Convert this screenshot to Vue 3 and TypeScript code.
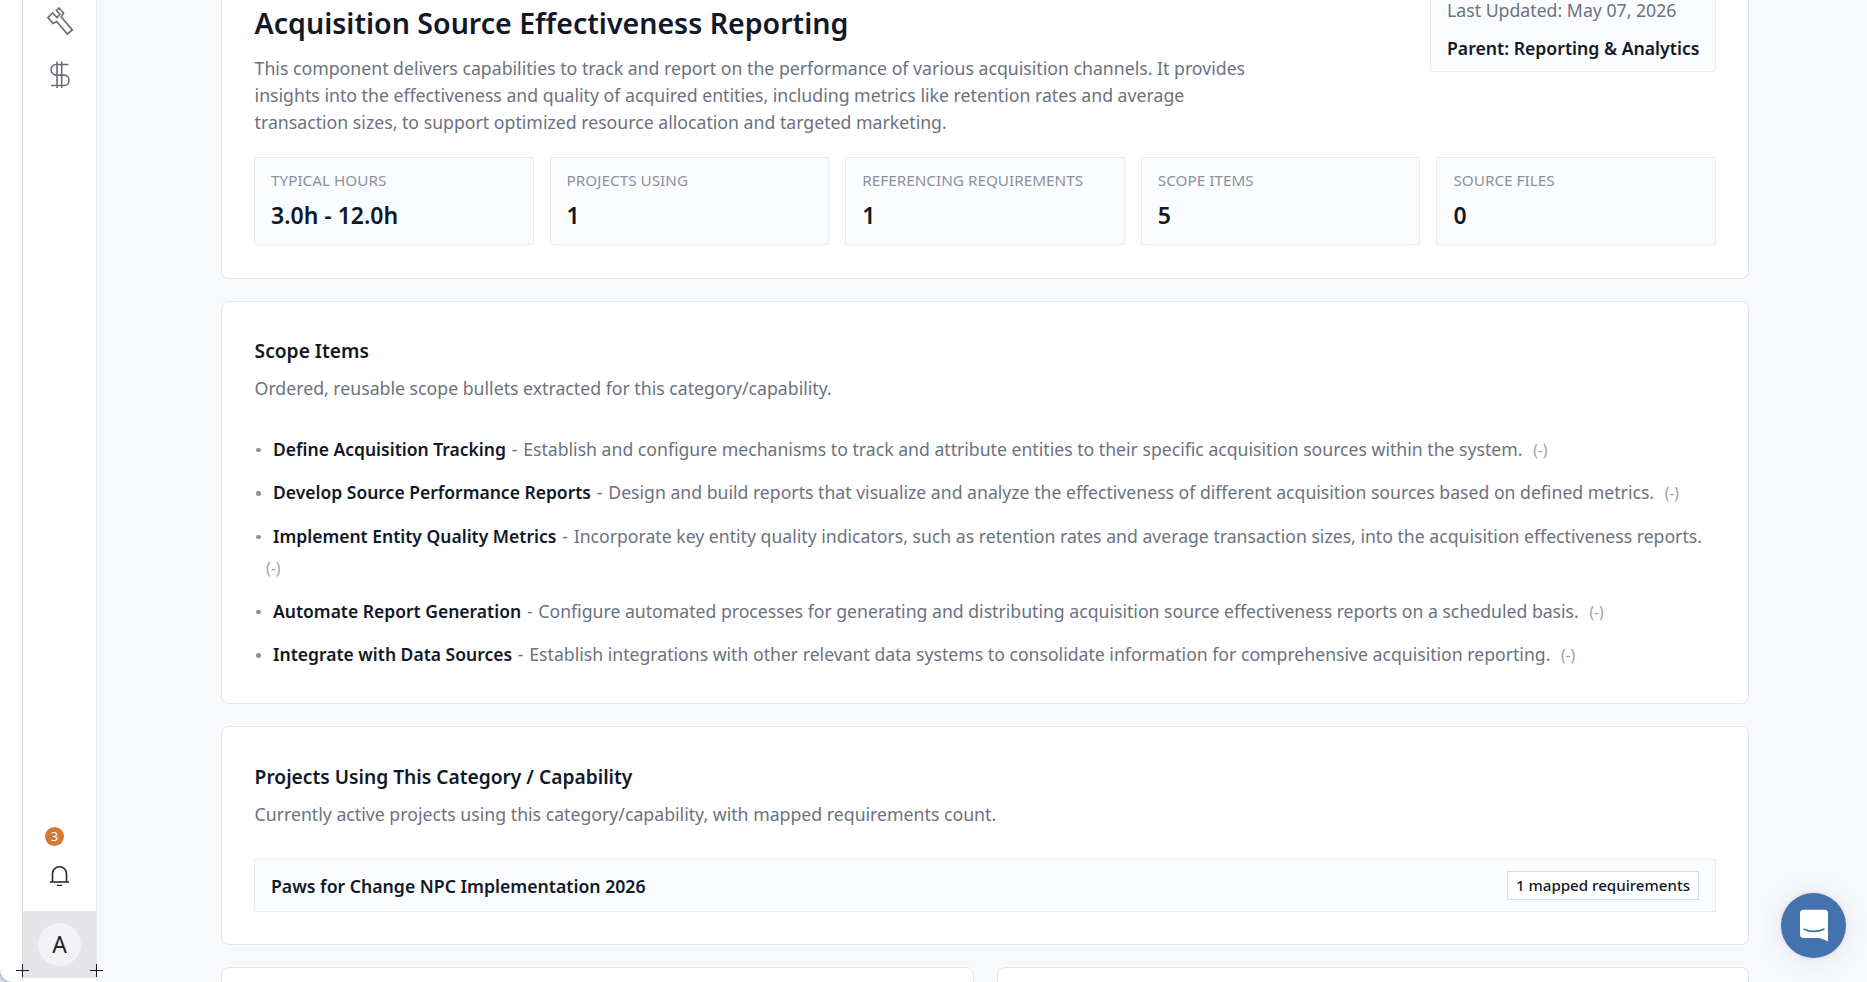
<script setup lang="ts">
interface Stat { label: string; value: string }
interface Scope { title: string; text: string }

const stats: Stat[] = [
  { label: 'TYPICAL HOURS', value: '3.0h - 12.0h' },
  { label: 'PROJECTS USING', value: '1' },
  { label: 'REFERENCING REQUIREMENTS', value: '1' },
  { label: 'SCOPE ITEMS', value: '5' },
  { label: 'SOURCE FILES', value: '0' },
]

const scopes: Scope[] = [
  { title: 'Define Acquisition Tracking', text: 'Establish and configure mechanisms to track and attribute entities to their specific acquisition sources within the system.' },
  { title: 'Develop Source Performance Reports', text: 'Design and build reports that visualize and analyze the effectiveness of different acquisition sources based on defined metrics.' },
  { title: 'Implement Entity Quality Metrics', text: 'Incorporate key entity quality indicators, such as retention rates and average transaction sizes, into the acquisition effectiveness reports.' },
  { title: 'Automate Report Generation', text: 'Configure automated processes for generating and distributing acquisition source effectiveness reports on a scheduled basis.' },
  { title: 'Integrate with Data Sources', text: 'Establish integrations with other relevant data systems to consolidate information for comprehensive acquisition reporting.' },
]
</script>

<template>
  <div class="frame">
    <div class="strip"></div>
    <aside class="rail">
      <div class="rail-top">
        <svg class="ico-a" viewBox="44 4 32 34" fill="none" stroke="#6f6b7b" stroke-width="1.7" stroke-linejoin="miter">
          <path d="M59 8 63.500 13 61.300 17 72.300 30 67.300 34 56.700 21.500 53 23.500 48 17.500 52.500 13 57 17.500 60 14 56.500 10.500Z" />
        </svg>
        <svg class="ico-b" viewBox="44 50 32 32" fill="none" stroke="#6f6b7b" stroke-width="1.6">
          <path d="M68.500 55.500H56a5 5.300 0 0 0 0 10.600h8.500a4.500 5.200 0 0 1 0 10.400H51" />
          <path d="M57 52.500v26.500M61.700 52.500v26.500" />
        </svg>
      </div>
      <div class="rail-bottom">
        <span class="badge">3</span>
        <svg class="bell" viewBox="0 0 24 24" fill="none" stroke="#24242c" stroke-width="1.8">
          <path d="M1 19.500h22M4 19.500V10a8 8 0 0 1 16 0v9.500M9 23.500h6" />
        </svg>
        <div class="user"><span class="avatar">A</span></div>
      </div>
      <span class="plus plus-l"></span>
      <span class="plus plus-r"></span>
    </aside>

    <main class="page">
      <section class="card head">
        <div class="head-row">
          <div class="head-text">
            <h1>Acquisition Source Effectiveness Reporting</h1>
            <p class="desc">This component delivers capabilities to track and report on the performance of various acquisition channels. It provides insights into the effectiveness and quality of acquired entities, including metrics like retention rates and average transaction sizes, to support optimized resource allocation and targeted marketing.</p>
          </div>
          <div class="meta">
            <div class="updated">Last Updated: May 07, 2026</div>
            <div class="parent">Parent: Reporting &amp; Analytics</div>
          </div>
        </div>
        <div class="stats">
          <div v-for="s in stats" :key="s.label" class="stat">
            <div class="stat-label">{{ s.label }}</div>
            <div class="stat-value">{{ s.value }}</div>
          </div>
        </div>
      </section>

      <section class="card scope">
        <h2>Scope Items</h2>
        <p class="sub">Ordered, reusable scope bullets extracted for this category/capability.</p>
        <ul class="list">
          <li v-for="s in scopes" :key="s.title">
            <strong>{{ s.title }}</strong> <span class="sep">-</span> <span class="txt">{{ s.text }}</span> <span class="dash">(-)</span>
          </li>
        </ul>
      </section>

      <section class="card projects">
        <h2>Projects Using This Category / Capability</h2>
        <p class="sub">Currently active projects using this category/capability, with mapped requirements count.</p>
        <div class="project">
          <span class="project-name">Paws for Change NPC Implementation 2026</span>
          <span class="pill">1 mapped requirements</span>
        </div>
      </section>

      <div class="two">
        <section class="card stub"></section>
        <section class="card stub"></section>
      </div>
    </main>

    <button class="chat" aria-label="Chat">
      <svg viewBox="0 0 30 34" width="28" height="33">
        <path d="M4 0h22a4 4 0 0 1 4 4v30l-9-3.500H4a4 4 0 0 1-4-4V4a4 4 0 0 1 4-4Z" fill="#fff" />
        <path d="M4.500 21c6 3 15 3 21 0" fill="none" stroke="#4472ae" stroke-width="1.800" stroke-linecap="round" />
      </svg>
    </button>
  </div>
</template>

<style>
html, body { margin: 0; background: #f8f9fb; overflow: hidden; }
</style>

<style scoped>
.frame {
  display: flex;
  height: 982px;
  overflow: hidden;
  position: relative;
  background: #f8f9fb;
  font-family: "Noto Sans", "Liberation Sans", sans-serif;
  color: #111827;
}
.strip {
  width: 22px;
  flex: none;
  background: #fff;
  border-right: 1px solid #d5dbe5;
  position: relative;
}
.strip::after {
  content: '';
  position: absolute;
  left: 0;
  bottom: 0;
  width: 12px;
  height: 12px;
  background: radial-gradient(circle at 100% 0, #fff 11px, #b9bec8 12.500px, #e6e8ec 16px);
}
.rail {
  width: 73px;
  flex: none;
  background: #fff;
  border-right: 1px solid #e5e8ef;
  display: flex;
  flex-direction: column;
  justify-content: space-between;
  position: relative;
}
.rail-top {
  display: flex;
  flex-direction: column;
  align-items: center;
  gap: 21px;
  margin-top: 4px;
}
.ico-a { width: 32px; height: 34px; }
.ico-b { width: 32px; height: 32px; }
.rail-bottom {
  display: flex;
  flex-direction: column;
  align-items: center;
  margin-bottom: 4px;
}
.badge {
  width: 19px;
  height: 19px;
  border-radius: 50%;
  background: #d07a35;
  color: #fff;
  font-size: 13px;
  line-height: 19px;
  text-align: center;
  margin-right: 10px;
}
.bell { width: 21px; height: 21px; margin-top: 19px; margin-bottom: 25px; }
.user {
  align-self: stretch;
  height: 67px;
  background: #e5e5ea;
  display: flex;
  align-items: flex-start;
  justify-content: center;
  padding-top: 12px;
  box-sizing: border-box;
}
.avatar {
  width: 43px;
  height: 43px;
  border-radius: 50%;
  background: #f3f3f5;
  font-size: 23px;
  line-height: 43px;
  text-align: center;
  color: #24242c;
}
.plus {
  position: absolute;
  width: 13px;
  height: 13px;
  bottom: 5px;
  background:
    linear-gradient(#1a1a1f, #1a1a1f) center / 13px 1.400px no-repeat,
    linear-gradient(#1a1a1f, #1a1a1f) center / 1.400px 13px no-repeat;
}
.plus-l { left: -7px; }
.plus-r { right: -7px; }

.page {
  flex: 1;
  min-width: 0;
  padding: 0 118px 0 124px;
  display: flex;
  flex-direction: column;
  gap: 22px;
}
.card {
  background: #fff;
  border: 1px solid #e2e6ee;
  border-radius: 8px;
  padding: 33px 32px;
  box-sizing: border-box;
  flex: none;
}
.head { margin-top: -60px; height: 339px; padding-top: 60px; border-top: 0; }
.head-row { display: flex; justify-content: space-between; align-items: flex-start; }
.head-text { width: 1000px; padding-left: 0.600px; box-sizing: border-box; }
h1 {
  margin: -1px 0 0;
  font-size: 28.550px;
  line-height: 48px;
  font-weight: 600;
  color: #111827;
}
.desc {
  margin: 8px 0 0;
  font-size: 17.700px;
  line-height: 27px;
  color: #6b7280;
}
.meta {
  margin-top: -60px;
  width: 286px;
  height: 132px;
  box-sizing: border-box;
  padding: 56px 16px 0;
  background: #fbfcfe;
  border: 1px solid #e8ebf1;
  border-radius: 3px;
  white-space: nowrap;
}
.updated { font-size: 17.700px; line-height: 27px; color: #6b7280; }
.parent { font-size: 17.650px; line-height: 27px; font-weight: 600; margin-top: 11px; color: #111827; }
.stats {
  display: grid;
  grid-template-columns: repeat(5, 1fr);
  gap: 16px;
  margin-top: 21px;
}
.stat {
  height: 88px;
  box-sizing: border-box;
  padding: 11px 16px;
  background: #fbfcfe;
  border: 1px solid #e8ebf1;
  border-radius: 2px;
}
.stat-label { font-size: 15.300px; line-height: 22px; color: #8b929e; white-space: nowrap; }
.stat-value { font-size: 23px; line-height: 32px; font-weight: 600; margin-top: 8px; color: #111827; }

h2 {
  margin: 0;
  padding-left: 0.600px;
  font-size: 19.200px;
  line-height: 32px;
  font-weight: 600;
  color: #111827;
}
.sub { margin: 8px 0 0; padding-left: 0.600px; font-size: 17.700px; line-height: 27px; color: #6b7280; }
.scope { height: 403px; padding-top: 33px; }
.list {
  list-style: none;
  margin: 31.500px 0 0;
  padding: 0;
  font-size: 17.650px;
  line-height: 31.500px;
  color: #6b7280;
}
.list li { padding-left: 12px; margin-bottom: 12px; position: relative; }
.list li strong { font-size: 17.500px; font-weight: 600; color: #111827; padding-left: 7px; }
.list li::before {
  content: '';
  position: absolute;
  left: 2px;
  top: 14px;
  width: 4.500px;
  height: 4.500px;
  border-radius: 50%;
  background: #8b929e;
}
.sep { margin: 0 1.200px; }
.txt { padding-right: 6px; }
.dash { font-size: 15.500px; line-height: 1; color: #9aa1ad; }
.projects { height: 219px; padding-top: 34px; }
.project {
  margin-top: 31px;
  height: 53px;
  box-sizing: border-box;
  display: flex;
  align-items: center;
  justify-content: space-between;
  padding: 0 16px;
  background: #fbfcfe;
  border: 1px solid #e8ebf1;
}
.project-name { font-size: 17.650px; font-weight: 600; color: #111827; }
.pill {
  font-size: 15.100px;
  line-height: 27px;
  font-weight: 500;
  padding: 0 8px;
  background: #fff;
  border: 1px solid #d5dbe5;
  color: #111827;
}
.two { display: grid; grid-template-columns: 1fr 1fr; gap: 23px; }
.stub { height: 120px; }
.chat {
  position: absolute;
  left: 1781px;
  top: 893px;
  width: 65px;
  height: 65px;
  border: 0;
  border-radius: 50%;
  background: #4472ae;
  padding: 0;
  display: flex;
  align-items: center;
  justify-content: center;
  box-shadow: 0 0 4px rgba(70, 70, 110, 0.10), 0 2px 26px rgba(70, 70, 110, 0.12);
}
</style>
